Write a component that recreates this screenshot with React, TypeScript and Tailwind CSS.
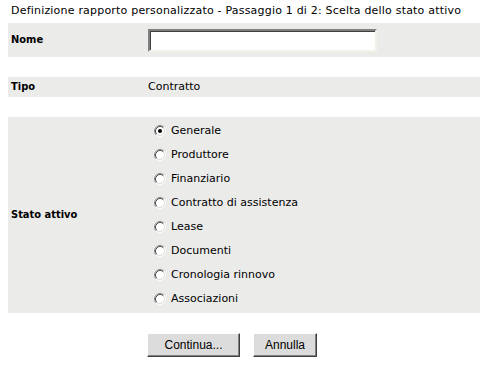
import React, { useState } from 'react';

const options = [
  'Generale',
  'Produttore',
  'Finanziario',
  'Contratto di assistenza',
  'Lease',
  'Documenti',
  'Cronologia rinnovo',
  'Associazioni',
];

function Radio({ checked }: { checked: boolean }) {
  return (
    <svg width="12" height="12" viewBox="0 0 12 12" className="shrink-0">
      <circle cx="6" cy="6" r="5" fill="#ffffff" />
      <path d="M2.11 9.89 A5.5 5.5 0 0 1 9.89 2.11" fill="none" stroke="#8a8a8a" />
      <path d="M9.89 2.11 A5.5 5.5 0 0 1 2.11 9.89" fill="none" stroke="#ffffff" />
      <path d="M2.82 9.18 A4.5 4.5 0 0 1 9.18 2.82" fill="none" stroke="#4a4a4a" />
      <path d="M9.18 2.82 A4.5 4.5 0 0 1 2.82 9.18" fill="none" stroke="#dcdcd6" />
      {checked && <circle cx="6" cy="6" r="2" fill="#000000" />}
    </svg>
  );
}

export default function App() {
  const [stato, setStato] = useState('Generale');

  return (
    <div className="w-[480px] h-[374px] bg-white pl-2 text-[11px] text-black font-['DejaVu_Sans',sans-serif]">
      {/* Title */}
      <div className="h-[23px] pl-[3px] flex items-center tracking-[0.2px]">
        Definizione rapporto personalizzato - Passaggio 1 di 2: Scelta dello stato attivo
      </div>

      {/* Nome */}
      <div className="h-[34px] bg-[#ebebea] flex items-center">
        <div className="w-[140px] pl-[3px] font-bold font-['DejaVu_Sans_Condensed','DejaVu_Sans',sans-serif]">Nome</div>
        <input
          type="text"
          className="w-[229px] h-[23px] bg-white border-2 border-t-[#808080] border-l-[#808080] border-b-[#f4f2e8] border-r-[#f4f2e8] shadow-[inset_1px_1px_0_#404040] outline-none px-1"
        />
      </div>

      <div className="h-[20px]" />

      {/* Tipo */}
      <div className="h-[20px] bg-[#ebebea] flex items-center">
        <div className="w-[140px] pl-[3px] font-bold font-['DejaVu_Sans_Condensed','DejaVu_Sans',sans-serif]">Tipo</div>
        <div>Contratto</div>
      </div>

      <div className="h-[20px]" />

      {/* Stato attivo */}
      <div className="h-[196px] bg-[#ebebea] flex">
        <div className="w-[140px] pl-[3px] font-bold font-['DejaVu_Sans_Condensed','DejaVu_Sans',sans-serif] flex items-center">Stato attivo</div>
        <div className="pt-[2px] pl-[6px] flex flex-col">
          {options.map((o) => (
            <label key={o} className="h-[24px] flex items-center gap-[5px] cursor-default" onClick={() => setStato(o)}>
              <Radio checked={stato === o} />
              <span>{o}</span>
            </label>
          ))}
        </div>
      </div>

      {/* Buttons */}
      <div className="mt-[20px] pl-[139px] flex gap-[13px] font-['Liberation_Sans',Arial,sans-serif] text-[12px]">
        <button className="w-[93px] h-[24px] bg-[#dcdcdc] border border-t-white border-l-white border-b-[#404040] border-r-[#404040] shadow-[inset_-1px_-1px_0_#808080]">
          Continua...
        </button>
        <button className="w-[64px] h-[24px] bg-[#dcdcdc] border border-t-white border-l-white border-b-[#404040] border-r-[#404040] shadow-[inset_-1px_-1px_0_#808080]">
          Annulla
        </button>
      </div>
    </div>
  );
}
